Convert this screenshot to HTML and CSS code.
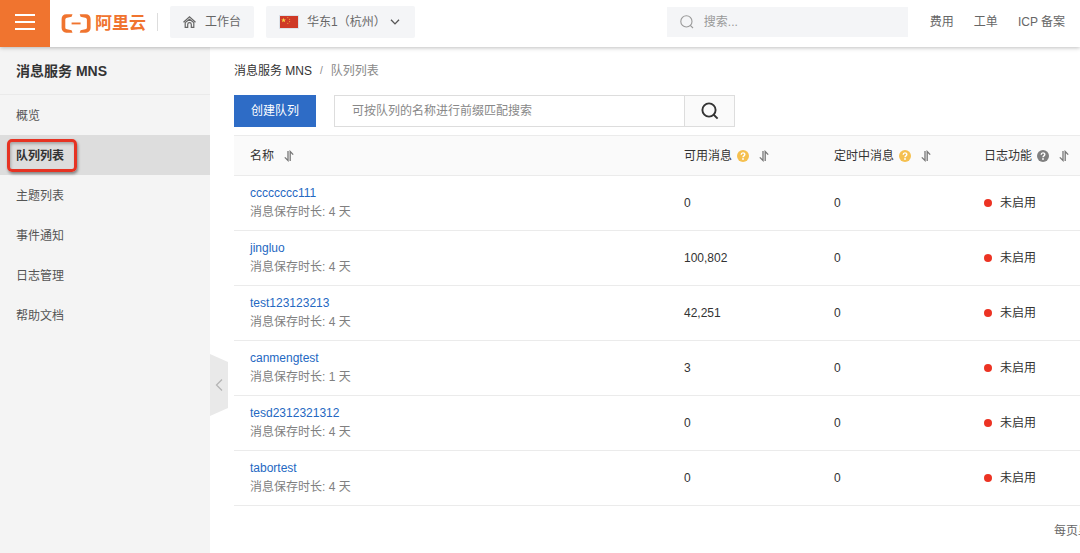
FILE: index.html
```html
<!DOCTYPE html>
<html lang="zh-CN">
<head>
	<title>消息服务 MNS</title>
	<meta charset="UTF-8">
	<meta name="viewport" content="width=device-width, initial-scale=1.0">
	<link rel="stylesheet" href="styles.css">
</head>
<body>
	<!-- shared icons -->
	<svg class="sprite" aria-hidden="true">
		<symbol id="sort" viewBox="0 0 10 12">
			<path d="M4 1V10.5L0.8 7.4M6.2 11V1.5L9.2 4.6" fill="none" stroke="#777" stroke-width="1.3"/>
		</symbol>
		<symbol id="help" viewBox="0 0 12 12">
			<circle cx="6" cy="6" r="6" fill="currentColor"/>
			<path d="M4.2 4.7C4.2 2.3 7.8 2.3 7.8 4.6C7.8 5.9 6 5.8 6 7.2" fill="none" stroke="#fff" stroke-width="1.4"/>
			<circle cx="6" cy="9" r="0.9" fill="#fff"/>
		</symbol>
	</svg>

	<header class="topbar">
		<button type="button" class="menu-btn" aria-label="menu">
			<svg width="20" height="18" viewBox="0 0 20 18"><path d="M0 2h20M0 9h20M0 16h20" stroke="#fff" stroke-width="2"/></svg>
		</button>
		<a href="#" class="logo">
			<svg width="30" height="19" viewBox="0 0 30 19" fill="#f0742f">
				<path d="M11.5 0.3H5.2C2.6 0.3 0.6 2.3 0.6 4.9V14.1C0.6 16.7 2.6 18.7 5.2 18.7H11.5L10.6 16.2L6 15.3C4.9 15 4.3 14.4 4.3 13.4V5.6C4.3 4.6 4.9 4 6 3.7L10.6 2.8Z"/>
				<path d="M18.7 0.3H25C27.6 0.3 29.6 2.3 29.6 4.9V14.1C29.6 16.7 27.6 18.7 25 18.7H18.7L19.6 16.2L24.2 15.3C25.3 15 25.9 14.4 25.9 13.4V5.6C25.9 4.6 25.3 4 24.2 3.7L19.6 2.8Z"/>
				<path d="M10.6 8.5H19.6V10.4H10.6Z"/>
			</svg>
			<span>阿里云</span>
		</a>
		<span class="divider"></span>
		<a href="#" class="chip">
			<svg width="13" height="12" viewBox="0 0 13 12" fill="none" stroke="#666" stroke-width="1.2">
				<path d="M0.5 6.2L6.5 0.9L12.5 6.2"/>
				<path d="M2.2 6.5V11.3H4.7V8.4C4.7 6.1 8.3 6.1 8.3 8.4V11.3H10.8V6.5L6.5 3.2Z"/>
			</svg>
			<span>工作台</span>
		</a>
		<button type="button" class="chip region">
			<svg class="flag" width="20" height="14" viewBox="0 0 20 14">
				<rect x="0.5" y="0.5" width="19" height="13" fill="#cf3a27" stroke="#dde3ea"/>
				<path d="M4.6 2.8L5.2 4.5H7L5.6 5.6L6.1 7.3L4.6 6.3L3.1 7.3L3.6 5.6L2.2 4.5H4Z" fill="#f8d648"/>
				<g fill="#e9a33b"><circle cx="8.8" cy="2.6" r="0.6"/><circle cx="10.6" cy="4.3" r="0.6"/><circle cx="10.6" cy="6.6" r="0.6"/><circle cx="8.8" cy="8.3" r="0.6"/></g>
			</svg>
			<span>华东1（杭州）</span>
			<svg width="10" height="6" viewBox="0 0 10 6"><path d="M1 0.7L5 4.9L9 0.7" fill="none" stroke="#555" stroke-width="1.3"/></svg>
		</button>
		<label class="global-search">
			<svg width="14" height="14" viewBox="0 0 14 14" fill="none" stroke="#999" stroke-width="1.1"><circle cx="6.4" cy="6.4" r="5.6"/><path d="M10.3 10.3L13 13"/></svg>
			<input type="text" placeholder="搜索..." aria-label="搜索">
		</label>
		<nav class="topnav">
			<a href="#">费用</a>
			<a href="#">工单</a>
			<a href="#">ICP 备案</a>
		</nav>
	</header>

	<div class="layout">
		<aside class="sidebar">
			<h1>消息服务 MNS</h1>
			<nav>
				<a href="#">概览</a>
				<a href="#" class="active">队列列表</a>
				<a href="#">主题列表</a>
				<a href="#">事件通知</a>
				<a href="#">日志管理</a>
				<a href="#">帮助文档</a>
			</nav>
			<button type="button" class="collapse" aria-label="collapse">
				<svg width="18" height="62" viewBox="0 0 18 62">
					<path d="M0 0L18 8V54L0 62Z" fill="#e9e9e9"/>
					<path d="M12 25.5L6.5 31L12 36.5" fill="none" stroke="#b5b5b5" stroke-width="1.3"/>
				</svg>
			</button>
		</aside>

		<main class="content">
			<div class="breadcrumb">
				<a href="#">消息服务 MNS</a>
				<span class="slash">/</span>
				<span>队列列表</span>
			</div>
			<form class="toolbar">
				<button type="button" class="create">创建队列</button>
				<div class="search">
					<input type="text" placeholder="可按队列的名称进行前缀匹配搜索" aria-label="队列名称">
					<button type="button" aria-label="搜索">
						<svg width="18" height="18" viewBox="0 0 18 18" fill="none" stroke="#333" stroke-width="1.9"><circle cx="8" cy="8" r="6.6"/><path d="M12.5 12.5L16.6 16.6"/></svg>
					</button>
				</div>
			</form>

			<table>
				<thead>
					<tr>
						<th>名称<svg class="sort"><use href="#sort"/></svg></th>
						<th class="col">可用消息<svg class="help"><use href="#help"/></svg><svg class="sort"><use href="#sort"/></svg></th>
						<th class="col">定时中消息<svg class="help"><use href="#help"/></svg><svg class="sort"><use href="#sort"/></svg></th>
						<th class="col">日志功能<svg class="help gray"><use href="#help"/></svg><svg class="sort"><use href="#sort"/></svg></th>
					</tr>
				</thead>
				<tbody>
					<tr>
						<td><a href="#">cccccccc111</a><p>消息保存时长: 4 天</p></td>
						<td>0</td>
						<td>0</td>
						<td><span class="status">未启用</span></td>
					</tr>
					<tr>
						<td><a href="#">jingluo</a><p>消息保存时长: 4 天</p></td>
						<td>100,802</td>
						<td>0</td>
						<td><span class="status">未启用</span></td>
					</tr>
					<tr>
						<td><a href="#">test123123213</a><p>消息保存时长: 4 天</p></td>
						<td>42,251</td>
						<td>0</td>
						<td><span class="status">未启用</span></td>
					</tr>
					<tr>
						<td><a href="#">canmengtest</a><p>消息保存时长: 1 天</p></td>
						<td>3</td>
						<td>0</td>
						<td><span class="status">未启用</span></td>
					</tr>
					<tr>
						<td><a href="#">tesd2312321312</a><p>消息保存时长: 4 天</p></td>
						<td>0</td>
						<td>0</td>
						<td><span class="status">未启用</span></td>
					</tr>
					<tr>
						<td><a href="#">tabortest</a><p>消息保存时长: 4 天</p></td>
						<td>0</td>
						<td>0</td>
						<td><span class="status">未启用</span></td>
					</tr>
				</tbody>
			</table>
			<div class="pager">每页显示</div>
		</main>
	</div>
</body>
</html>
```

FILE: styles.css
```css
*, *::before, *::after {
	box-sizing: border-box;
}

body {
	margin: 0;
	min-height: 100vh;
	display: flex;
	flex-direction: column;
	overflow: hidden;
	font-family: "Liberation Sans", "Noto Sans CJK SC", sans-serif;
	font-size: 12px;
	line-height: 20px;
	color: #333;
	background: #fff;
}

a {
	color: inherit;
	text-decoration: none;
}

button, input {
	font: inherit;
	color: inherit;
	border: none;
	border-radius: 0;
	padding: 0;
	background: none;
}

button {
	cursor: pointer;
}

svg {
	flex-shrink: 0;
}

.sprite {
	position: absolute;
	width: 0;
	height: 0;
}

/* top bar */
.topbar {
	position: relative;
	z-index: 2;
	display: flex;
	align-items: center;
	height: 47px;
	padding-right: 15px;
	background: #fff;
	box-shadow: 0 1px 4px rgba(0, 0, 0, 0.25);
	color: #666;
}

.menu-btn {
	display: flex;
	align-items: center;
	justify-content: center;
	width: 50px;
	height: 47px;
	padding-bottom: 3px;
	background: #f0742f;
}

.logo {
	display: flex;
	align-items: center;
	gap: 4px;
	padding: 0 11px;
	font-size: 17px;
	font-weight: bold;
	color: #f0742f;
	white-space: nowrap;
}

.divider {
	width: 1px;
	height: 18px;
	margin-right: 12px;
	margin-bottom: 3px;
	background: #ddd;
}

.chip {
	display: flex;
	align-items: center;
	gap: 9px;
	height: 32px;
	margin-right: 12px;
	margin-bottom: 3px;
	padding: 0 13px;
	border-radius: 2px;
	background: #f4f5f7;
	white-space: nowrap;
}

.region {
	gap: 4px;
	padding-right: 15px;
}

.flag {
	margin-right: 4px;
}

.global-search {
	display: flex;
	align-items: center;
	gap: 10px;
	width: 241px;
	height: 30px;
	margin-left: auto;
	margin-right: 22px;
	margin-bottom: 3px;
	padding: 0 13px;
	background: #f4f5f7;
}

.global-search input {
	width: 100%;
	outline: none;
}

.topnav {
	display: flex;
	gap: 20px;
	margin-bottom: 3px;
	white-space: nowrap;
}

input::placeholder {
	color: #999;
	opacity: 1;
}

/* sidebar */
.layout {
	display: flex;
	flex: 1;
}

.sidebar {
	position: relative;
	flex: 0 0 210px;
	background: #f4f4f4;
}

.sidebar h1 {
	margin: 0;
	padding: 14px 16px 13px;
	border-bottom: 1px solid #eaeaea;
	font-size: 14px;
	font-weight: bold;
}

.sidebar nav a {
	display: block;
	padding: 11px 16px 9px;
	color: #555;
}

.sidebar nav .active {
	position: relative;
	background: #ddd;
	color: #333;
	font-weight: bold;
}

/* red frame over the current item */
.sidebar nav .active::after {
	content: "";
	position: absolute;
	left: 7px;
	top: 4px;
	width: 70px;
	height: 33px;
	border: 3px solid #e63323;
	border-radius: 5px;
	box-shadow: 1px 2px 3px rgba(0, 0, 0, 0.4), inset 1px 2px 3px rgba(0, 0, 0, 0.25);
}

.collapse {
	position: absolute;
	left: 100%;
	top: 307px;
}

.collapse svg {
	display: block;
}

/* content */
.content {
	flex: 1;
	min-width: 0;
	padding: 14px 0 0 24px;
}

.breadcrumb {
	display: flex;
	gap: 8px;
	margin-bottom: 14px;
	color: #888;
}

.breadcrumb a {
	color: #333;
}

.breadcrumb .slash {
	font-size: 10px;
}

.toolbar {
	display: flex;
	gap: 18px;
	margin: 0 0 8px;
}

.create {
	height: 32px;
	padding: 0 17px;
	background: #2e6cc6;
	color: #fff;
}

.search {
	display: flex;
	width: 401px;
	height: 32px;
	border: 1px solid #ddd;
}

.search input {
	flex: 1;
	min-width: 0;
	padding: 0 17px;
	outline: none;
}

.search input::placeholder {
	color: #888;
}

.search button {
	display: flex;
	align-items: center;
	justify-content: center;
	width: 50px;
	border-left: 1px solid #ddd;
	background: #fafafa;
}

table {
	width: 100%;
	min-width: 884px;
	table-layout: fixed;
	border-collapse: collapse;
}

th, td {
	padding: 8px 16px;
	border-bottom: 1px solid #ebebeb;
	text-align: left;
	white-space: nowrap;
}

th {
	height: 40px;
	padding: 0 16px;
	border-top: 1px solid #ebebeb;
	background: #fafafa;
	font-weight: normal;
}

.col {
	width: 150px;
}

td {
	height: 55px;
}

td a {
	display: block;
	line-height: 19px;
	color: #2468c2;
}

td p {
	margin: 0;
	line-height: 19px;
	color: #808080;
}

.sort {
	width: 10px;
	height: 12px;
	margin-left: 10px;
	vertical-align: -2px;
}

.help {
	width: 12px;
	height: 12px;
	margin-left: 5px;
	vertical-align: -2px;
	color: #f5c04f;
}

.gray {
	color: #808080;
}

.status {
	display: flex;
	align-items: center;
	gap: 8px;
}

.status::before {
	content: "";
	width: 8px;
	height: 8px;
	border-radius: 50%;
	background: #ec3323;
}

.pager {
	display: flex;
	justify-content: flex-end;
	min-width: 884px;
	padding: 15px 16px 0;
	color: #666;
}
```
